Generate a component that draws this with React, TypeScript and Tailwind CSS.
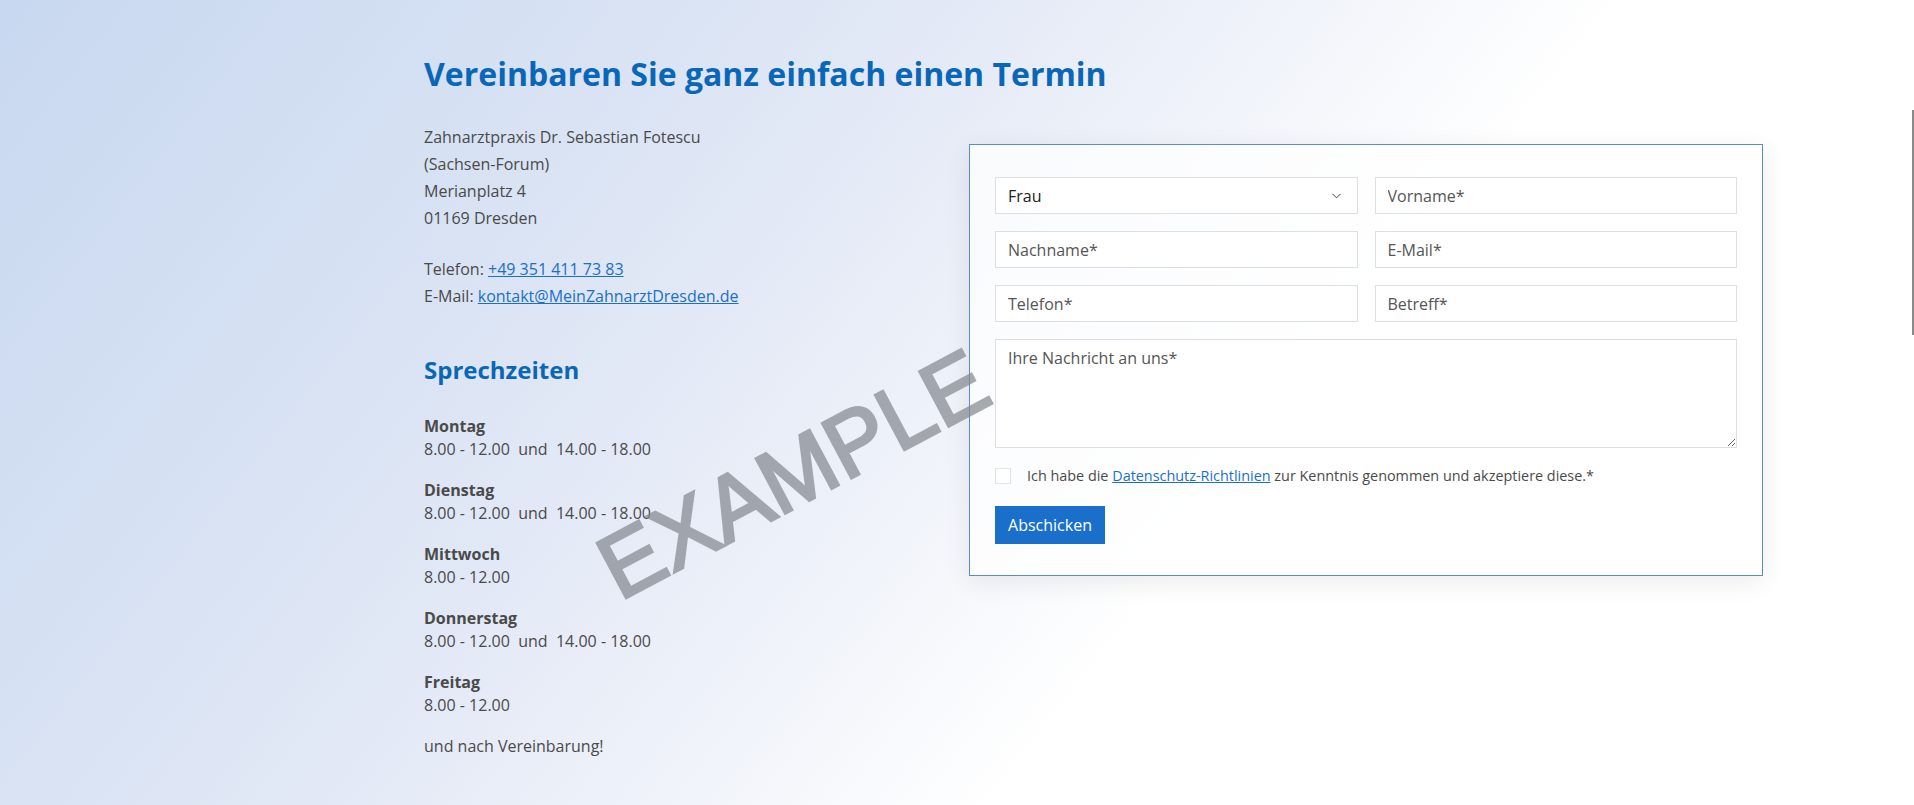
import { ChevronDown } from "lucide-react";

const days = [
  { day: "Montag", time: "8.00 - 12.00  und  14.00 - 18.00" },
  { day: "Dienstag", time: "8.00 - 12.00  und  14.00 - 18.00" },
  { day: "Mittwoch", time: "8.00 - 12.00" },
  { day: "Donnerstag", time: "8.00 - 12.00  und  14.00 - 18.00" },
  { day: "Freitag", time: "8.00 - 12.00" },
];

const inputCls =
  "h-[37px] w-full border border-[#dcdfe3] bg-white px-3 text-[16px] text-[#333] placeholder:text-[#555] outline-none";

const App = () => {
  return (
    <div className="relative min-h-[805px] w-full overflow-hidden bg-[linear-gradient(128deg,#c8d8f0_0%,#d6e1f3_22%,#e3e9f6_38%,#f1f4fa_52%,#ffffff_64%)] font-['Open_Sans',sans-serif] text-[#4a4a4a]">
      <div className="flex pl-[424px] pt-[52px]">
        {/* Left column */}
        <div className="w-[545px] shrink-0">
          <h1 className="text-[32px] leading-[44px] font-bold whitespace-nowrap text-[#0a67b8]">
            Vereinbaren Sie ganz einfach einen Termin
          </h1>

          <div className="mt-[28px] text-[16px] leading-[27px]">
            <p>
              Zahnarztpraxis Dr. Sebastian Fotescu
              <br />
              (Sachsen-Forum)
              <br />
              Merianplatz 4
              <br />
              01169 Dresden
            </p>
            <p className="mt-[24px]">
              Telefon:{" "}
              <a href="#" className="text-[#1a6fc9] underline">
                +49 351 411 73 83
              </a>
              <br />
              E-Mail:{" "}
              <a href="#" className="text-[#1a6fc9] underline">
                kontakt@MeinZahnarztDresden.de
              </a>
            </p>
          </div>

          <h2 className="mt-[45px] text-[24px] leading-[30px] font-bold text-[#0a67b8]">
            Sprechzeiten
          </h2>

          <div className="mt-[30px] text-[16px] leading-[23px]">
            {days.map((d) => (
              <div key={d.day} className="mb-[18px]">
                <div className="font-bold">{d.day}</div>
                <div className="whitespace-pre">{d.time}</div>
              </div>
            ))}
            <p>und nach Vereinbarung!</p>
          </div>
        </div>

        {/* Form card */}
        <div className="mt-[92px] h-fit w-[794px] shrink-0 border border-[#5a8dc8] bg-white/75 px-[25px] pt-[32px] pb-[31px] shadow-[0_6px_24px_rgba(0,0,0,0.08)]">
          <div className="grid grid-cols-2 gap-x-[17px] gap-y-[17px]">
            <div className="relative">
              <select className="h-[37px] w-full appearance-none border border-[#dcdfe3] bg-white px-3 text-[16px] text-[#222] outline-none">
                <option>Frau</option>
                <option>Herr</option>
              </select>
              <ChevronDown
                size={15}
                strokeWidth={1.5}
                className="pointer-events-none absolute top-1/2 right-[14px] -translate-y-1/2 text-[#333]"
              />
            </div>
            <input className={inputCls} placeholder="Vorname*" />
            <input className={inputCls} placeholder="Nachname*" />
            <input className={inputCls} placeholder="E-Mail*" />
            <input className={inputCls} placeholder="Telefon*" />
            <input className={inputCls} placeholder="Betreff*" />
            <textarea
              className="col-span-2 h-[109px] w-full border border-[#dcdfe3] bg-white px-3 py-[6px] text-[16px] text-[#333] placeholder:text-[#555] outline-none"
              placeholder="Ihre Nachricht an uns*"
            />
          </div>

          <label className="mt-[17px] flex items-center gap-[16px] text-[14.4px] text-[#4a4a4a]">
            <span className="h-[16px] w-[16px] shrink-0 border border-[#e2e4e8] bg-white" />
            <span>
              Ich habe die{" "}
              <a href="#" className="text-[#1a6fc9] underline">
                Datenschutz-Richtlinien
              </a>{" "}
              zur Kenntnis genommen und akzeptiere diese.*
            </span>
          </label>

          <button className="mt-[19px] h-[38px] w-[110px] bg-[#1a6fca] text-[16px] text-white">
            Abschicken
          </button>
        </div>
      </div>

      {/* Watermark */}
      <div className="pointer-events-none absolute top-[474px] left-[793px] -translate-x-1/2 -translate-y-1/2 -rotate-[28deg] font-['Liberation_Sans',sans-serif] text-[90px] leading-none text-[#83878e] opacity-70 [-webkit-text-stroke:3px_#83878e] select-none">
        EXAMPLE
      </div>

      {/* scrollbar edge */}
      <div className="absolute top-[110px] right-0 h-[225px] w-[2px] bg-[#8a8a8a]" />
    </div>
  );
};

export default App;
